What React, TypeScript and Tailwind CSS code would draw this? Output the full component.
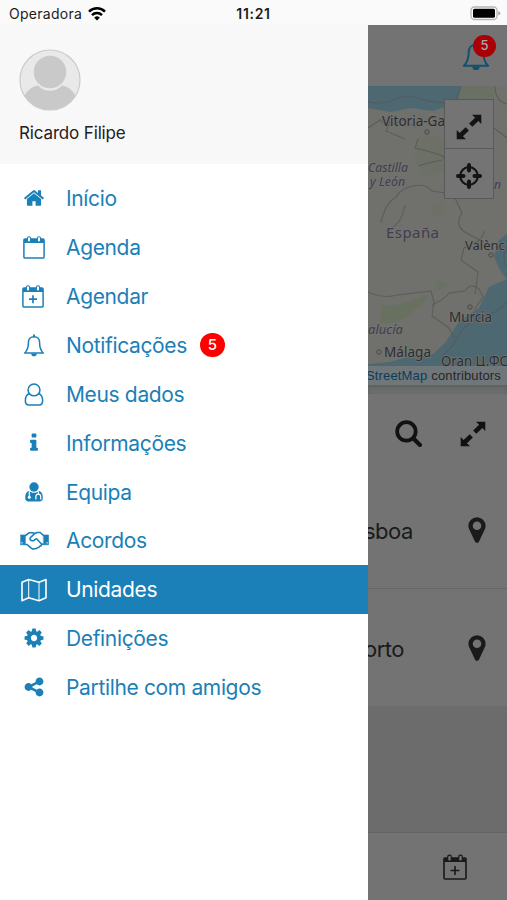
import React from "react";

interface IconProps {
  className?: string;
}

interface MenuItem {
  label: string;
  icon: React.ReactNode;
  badge?: number;
  active?: boolean;
}

function SolidIcon({ d, className }: { d: string; className?: string }) {
  return (
    <svg viewBox="0 0 1792 1792" fill="currentColor" className={className}>
      <path d={d} />
    </svg>
  );
}

const homePath =
  "M1472 992v480q0 26-19 45t-45 19h-384v-384h-256v384h-384q-26 0-45-19t-19-45v-480q0-1 .5-3t.5-3l575-474 575 474q1 2 1 6zm223-69l-62 74q-8 9-21 11h-3q-13 0-21-7l-692-577-692 577q-12 8-24 7-13-2-21-11l-62-74q-8-10-7-23.5t11-21.5l719-599q32-26 76-26t76 26l244 204v-195q0-14 9-23t23-9h192q14 0 23 9t9 23v408l219 182q10 8 11 21.5t-7 23.5z";
const infoPath =
  "M1216 1344v128q0 26-19 45t-45 19h-512q-26 0-45-19t-19-45v-128q0-26 19-45t45-19h64v-384h-64q-26 0-45-19t-19-45v-128q0-26 19-45t45-19h384q26 0 45 19t19 45v576h64q26 0 45 19t19 45zm-128-1152v192q0 26-19 45t-45 19h-256q-26 0-45-19t-19-45v-192q0-26 19-45t45-19h256q26 0 45 19t19 45z";
const sharePath =
  "M1344 1024q133 0 226.5 93.5t93.5 226.5-93.5 226.5-226.5 93.5-226.5-93.5-93.5-226.5q0-12 2-34l-360-180q-92 86-218 86-133 0-226.5-93.5t-93.5-226.5 93.5-226.5 226.5-93.5q126 0 218 86l360-180q-2-22-2-34 0-133 93.5-226.5t226.5-93.5 226.5 93.5 93.5 226.5-93.5 226.5-226.5 93.5q-126 0-218-86l-360 180q2 22 2 34t-2 34l360 180q92-86 218-86z";
const cogPath =
  "M1152 896q0-106-75-181t-181-75-181 75-75 181 75 181 181 75 181-75 75-181zm512-109v222q0 12-8 23t-20 13l-185 28q-19 54-39 91 35 50 107 138 10 12 10 25t-9 23q-27 37-99 108t-94 71q-12 0-26-9l-138-108q-44 23-91 38-16 136-29 186-7 28-36 28h-222q-14 0-24.5-8.5t-11.5-21.5l-28-184q-49-16-90-37l-141 107q-10 9-25 9-14 0-25-11-126-114-165-168-7-10-7-23 0-12 8-23 15-21 51-66.5t54-70.5q-27-50-41-99l-183-27q-13-2-21-12.5t-8-23.5v-222q0-12 8-23t19-13l186-28q14-46 39-92-40-57-107-138-10-12-10-24 0-10 9-23 26-36 98.5-107.5t94.5-71.5q13 0 26 10l138 107q44-23 91-38 16-136 29-186 7-28 36-28h222q14 0 24.5 8.500t11.500 21.500l28 184q49 16 90 37l142-107q9-9 24-9 13 0 25 10 129 119 165 170 7 8 7 22 0 12-8 23-15 21-51 66.500t-54 70.500q26 50 41 98l183 28q13 2 21 12.500t8 23.500z";
const markerPath =
  "M1152 640q0-106-75-181t-181-75-181 75-75 181 75 181 181 75 181-75 75-181zm256 0q0 109-33 179l-364 774q-16 33-47.5 52t-67.5 19-67.5-19-46.5-52l-365-774q-33-70-33-179 0-212 150-362t362-150 362 150 150 362z";

function CalendarIcon({ plus, className }: IconProps & { plus?: boolean }) {
  return (
    <svg viewBox="0 0 22 23" fill="none" stroke="currentColor" className={className}>
      <rect x="0.900" y="2.900" width="20.200" height="19.200" rx="1.200" strokeWidth="1.500" />
      <path d="M1 3h20v4H1z" fill="currentColor" stroke="none" />
      <rect x="4.400" y="0.700" width="3.200" height="5.400" rx="1.600" className="fill-white" strokeWidth="1.100" />
      <rect x="14.400" y="0.700" width="3.200" height="5.400" rx="1.600" className="fill-white" strokeWidth="1.100" />
      {plus && <path d="M11 10.200v8M7 14.200h8" strokeWidth="1.700" />}
    </svg>
  );
}

function BellIcon({ className }: IconProps) {
  return (
    <svg viewBox="0 0 24 26" fill="none" stroke="currentColor" strokeWidth="1.700" strokeLinejoin="round" className={className}>
      <path d="M12 3C8 3 5.700 6 5.700 9.500 5.700 15 4.500 18.500 1.500 21.500H22.500C19.500 18.500 18.300 15 18.300 9.500 18.300 6 16 3 12 3Z" />
      <path d="M12 1.400v1.400" strokeWidth="2.200" strokeLinecap="round" />
      <path d="M8.800 22a3.200 3.200 0 0 0 6.400 0z" fill="currentColor" stroke="none" />
    </svg>
  );
}

function UserIcon({ className }: IconProps) {
  return (
    <svg viewBox="0 0 20 24" fill="none" stroke="currentColor" strokeWidth="1.600" className={className}>
      <circle cx="10" cy="7.200" r="6.200" />
      <path d="M5.200 11.200C2.200 11.800 1 14.600 1 18.600 1 21.200 2.400 23 4.600 23h10.800c2.200 0 3.600-1.800 3.600-4.400 0-4-1.200-6.800-4.200-7.400" />
    </svg>
  );
}

function DoctorIcon({ className }: IconProps) {
  return (
    <svg viewBox="0 0 18 20" fill="currentColor" className={className}>
      <circle cx="9" cy="5" r="4.700" />
      <path d="M4.200 8.700C1.200 9.500.2 12 .2 16c0 2.200 1.200 3.500 3.200 3.500h11.200c2 0 3.200-1.300 3.200-3.500 0-4-1-6.500-4-7.300C11.500 11.500 6.500 11.500 4.200 8.700z" />
      <g fill="none" stroke="#fff" strokeWidth="1.200">
        <path d="M4.300 9.300v5.200" />
        <path d="M13.300 9.300v2.800M10.900 17.500v-2.900a2.400 2.400 0 0 1 4.800 0v2.900" />
      </g>
      <circle cx="4.300" cy="15.200" r="1.500" fill="#fff" />
    </svg>
  );
}

function HandshakeIcon({ className }: IconProps) {
  return (
    <svg viewBox="0 0 29 20" fill="none" stroke="currentColor" strokeWidth="1.600" strokeLinejoin="round" strokeLinecap="round" className={className}>
      <path d="M.5 4h4.800v9.800H.5zM23.700 4h4.800v9.800h-4.800z" fill="currentColor" strokeWidth=".6" />
      <path d="M5.500 4.500 9 1.800h4l1.600.8L17 1.500h3.200l3.300 3" />
      <path d="M5.500 13.500h1.600l4 3.700c1.200 1 2.400 1.300 3.500.5 1.200.2 2.100-.1 2.800-1 1.100 0 2-.5 2.300-1.500 1.300-.1 2-.8 1.900-1.900h1.900" />
      <path d="M14.600 2.600 10.500 6.500c-1 1.200-.2 3.300 1.800 3.300 1.900 0 2.600-2 4.300-2l4.900 5.200" />
      <path d="M1.800 11.800h.3M26.900 11.800h.3" stroke="#fff" strokeWidth="1.300" />
    </svg>
  );
}

function MapIcon({ className }: IconProps) {
  return (
    <svg viewBox="0 0 26 24" fill="none" stroke="currentColor" strokeWidth="1.600" strokeLinejoin="round" className={className}>
      <path d="M1 4.200 7.700 1.500 18 4.200 25 1.500v18.300l-7 2.900-10.300-2.900L1 22.700z" />
      <path d="M7.700 1.500v18.300M18 4.200v18.500" strokeWidth="1" />
    </svg>
  );
}

function ExpandIcon({ className }: IconProps) {
  return (
    <svg viewBox="0 0 26 26" fill="currentColor" className={className}>
      <path d="M16 .8h9.300V10l-2.900-2.900-6.100 5.700-3.200-3.200 6-5.800z" />
      <path d="M10 25.200H.7V16l2.900 2.900 6.100-5.700 3.200 3.200-6 5.800z" />
    </svg>
  );
}

function TargetIcon({ className }: IconProps) {
  return (
    <svg viewBox="0 0 26 26" fill="none" stroke="currentColor" className={className}>
      <circle cx="13" cy="13" r="8.800" strokeWidth="2.200" />
      <path d="M13 2v5.500M13 18.500V24M2 13h5.500M18.500 13H24" strokeWidth="4" strokeLinecap="round" />
    </svg>
  );
}

function SearchIcon({ className }: IconProps) {
  return (
    <svg viewBox="0 0 26 26" fill="none" stroke="currentColor" className={className}>
      <circle cx="11" cy="11" r="8.900" strokeWidth="3.600" />
      <path d="M17.500 17.500 24 24" strokeWidth="4" strokeLinecap="round" />
    </svg>
  );
}

const menuItems: MenuItem[] = [
  { label: "Início", icon: <SolidIcon d={homePath} className="h-[22px] w-[22px]" /> },
  { label: "Agenda", icon: <CalendarIcon className="h-[23px] w-[22px]" /> },
  { label: "Agendar", icon: <CalendarIcon plus className="mr-[2px] h-[23px] w-[22px]" /> },
  { label: "Notificações", icon: <BellIcon className="h-[23px] w-[22px]" />, badge: 5 },
  { label: "Meus dados", icon: <UserIcon className="h-[23px] w-[20px]" /> },
  { label: "Informações", icon: <SolidIcon d={infoPath} className="h-[22px] w-[22px]" /> },
  { label: "Equipa", icon: <DoctorIcon className="h-[20px] w-[18px]" /> },
  { label: "Acordos", icon: <HandshakeIcon className="h-[20px] w-[29px]" /> },
  { label: "Unidades", icon: <MapIcon className="h-[24px] w-[26px]" />, active: true },
  { label: "Definições", icon: <SolidIcon d={cogPath} className="h-[22px] w-[22px]" /> },
  { label: "Partilhe com amigos", icon: <SolidIcon d={sharePath} className="h-[22px] w-[22px]" /> },
];

function StatusBar() {
  return (
    <div className="flex h-[25px] shrink-0 items-center bg-[#fafafa] pt-[2px] text-[#1c1c1c]">
      <div className="flex w-[169px] items-center gap-[6px] pl-[9px]">
        <span className="text-[14px] tracking-[0.28px]">Operadora</span>
        <svg viewBox="0 0 18 14" fill="none" stroke="#000" strokeWidth="2.500" className="h-[14px] w-[18px]">
          <path d="M1 4.600a11.500 11.500 0 0 1 16 0M4 8.100a7.200 7.200 0 0 1 10 0" />
          <path d="M9 13.500 6.200 10.700a4 4 0 0 1 5.600 0z" fill="#000" stroke="none" />
        </svg>
      </div>
      <div className="flex-1 text-center text-[14px] font-semibold tracking-[0.7px]">11:21</div>
      <div className="flex w-[169px] justify-end pr-[6px]">
        <svg viewBox="0 0 31 15" className="h-[15px] w-[31px]">
          <rect x="1" y="1" width="26" height="12.500" rx="3.500" fill="#fff" stroke="#b5b5b5" strokeWidth="1.300" />
          <rect x="3" y="2.800" width="22" height="9" rx="1.500" fill="#000" />
          <path d="M28.300 5v4.500q2-.8 2-2.250T28.300 5z" fill="#a5a5a5" />
        </svg>
      </div>
    </div>
  );
}

function Avatar() {
  return (
    <svg viewBox="0 0 62 62" className="h-[62px] w-[62px]">
      <clipPath id="avatar">
        <circle cx="31" cy="31" r="30" />
      </clipPath>
      <circle cx="31" cy="31" r="30" fill="#e9e9e9" />
      <g clipPath="url(#avatar)" fill="#c9c9c9">
        <path d="M4 50C7 42 13 37 19 36.500 25 43.500 37 43.500 43 36.500 49 37 55 42 58 50V62H4z" />
        <circle cx="31" cy="23" r="16.300" />
      </g>
      <circle cx="31" cy="31" r="30" fill="none" stroke="#cbcbcb" strokeWidth="1.200" />
    </svg>
  );
}

function Drawer() {
  return (
    <aside className="flex w-[368px] shrink-0 flex-col bg-white">
      <div className="h-[139px] bg-[#f8f8f8] pt-[24px] pl-[19px]">
        <Avatar />
        <p className="mt-[10px] text-[17px] leading-[24px] tracking-[-0.15px] text-[#222]">Ricardo Filipe</p>
      </div>
      <nav className="flex flex-col pt-[10px]">
        {menuItems.map((item) => (
          <a
            key={item.label}
            className={
              item.active
                ? "flex h-[48.900px] items-center bg-[#1b80b8] text-white"
                : "flex h-[48.900px] items-center text-[#1b80b8]"
            }
          >
            <span className="flex w-[66px] justify-center pl-[2px]">{item.icon}</span>
            <span className="pt-px text-[21px] tracking-[-0.35px]">{item.label}</span>
            {item.badge && (
              <span className="ml-[13px] flex h-[24px] w-[25px] items-center justify-center rounded-full bg-[#fe0000] text-[15px] font-medium text-white">
                {item.badge}
              </span>
            )}
          </a>
        ))}
      </nav>
    </aside>
  );
}

function MapView() {
  return (
    <div className="relative h-[299px] shrink-0 overflow-hidden">
      <svg viewBox="0 0 139 299" className="h-[299px] w-[139px]">
        <rect width="139" height="299" fill="#70716d" />
        <g fill="#68705f">
          <path d="M50 51q14-5 28 5l-4 14q12 7 4 15l-21 6-10-17z" opacity=".5" />
          <path d="M14 219q24 2 43-11 4 8-12 17-11 14-33 12z" />
          <path d="M67 196q8-4 14 4l-10 5zM93 0h33v13H90z" opacity=".7" />
          <path d="M62 119l13-4 1 12-11 4z" opacity=".5" />
        </g>
        <g fill="#4e6871">
          <path d="M0 0h93l-4 17-24 8-22-3-20 4-23-4z" />
          <path d="M139 148l-8 6-5 17 7 15 6 7-18 8-10 21-19 12-15 23-12 11-25 3-18 5-22 2v21h139z" />
        </g>
        <g fill="none" stroke="#505d68" strokeWidth="1.300">
          <path d="M0 16q17 3 27-3 13-5 25 0 16 4 30 4M93 0l-5 15" />
          <path d="M139 161q-6 8 0 20M139 216q-8 11-28 16-17 7-25 26l-12 13" />
        </g>
        <g fill="none" stroke="#5c5d5a" strokeWidth="1.100">
          <path d="M0 42l12-8 8 6 15-6 13 7M50 53l-3 9 16 4 12 4 5 12M13 137q4-20 15-26 5-9 17-11 13-3 19 5l21 3 9 19q-9 13 6 21l16 8" />
          <path d="M0 206q15 7 30 3l33-4 3 11-2 14 17 12 6 11M64 219q13-6 17-12l16-2q6-9 14-2l4 8-9 13M107 208l3-22-17-12 3-12 16-8 5-9M22 35l-4 10 19 8M37 119q-3 20-19 26" />
          <path d="M127 0q0 15 12 18M126 42l13 10M50 80l14-4 10-2" />
        </g>
        <g fontFamily="Noto Sans, sans-serif" fill="#2d2d30" fontSize="13.500" stroke="#737470" strokeWidth="1.600" paintOrder="stroke">
          <text x="14" y="40">Vitoria-Ga</text>
          <text x="97" y="164" fontSize="13">Valènc</text>
          <text x="81" y="236" textLength="43">Murcia</text>
          <text x="16" y="271" textLength="47">Málaga</text>
          <text x="73" y="280" textLength="67" lengthAdjust="spacingAndGlyphs">Oran Ц.ФС</text>
          <g fill="#413c4e">
            <text x="18" y="152" textLength="53" fontSize="15">España</text>
            <g fontStyle="italic" fontSize="12">
              <text x="0" y="86" textLength="40" lengthAdjust="spacingAndGlyphs">Castilla</text>
              <text x="2" y="100" textLength="35" lengthAdjust="spacingAndGlyphs">y León</text>
              <text x="0" y="248" textLength="35" lengthAdjust="spacingAndGlyphs">alucía</text>
              <text x="126" y="103">n</text>
            </g>
          </g>
        </g>
        <g fill="#70716d" stroke="#484848" strokeWidth="1">
          <circle cx="59" cy="46" r="2.200" />
          <circle cx="123" cy="169" r="2.200" />
          <circle cx="102" cy="221" r="2.200" />
          <circle cx="11" cy="266" r="2.200" />
        </g>
      </svg>
      <div className="absolute top-[13px] right-[13px] flex w-[50px] flex-col border border-[#595959] bg-[#747474] text-[#141414]">
        <button className="flex h-[49px] items-center justify-center border-b border-[#5b5b5b]">
          <ExpandIcon className="mt-[6px] h-[26px] w-[26px]" />
        </button>
        <button className="flex h-[49px] items-center justify-center">
          <TargetIcon className="mt-[4px] h-[26px] w-[26px]" />
        </button>
      </div>
      <div className="absolute right-0 bottom-0 flex h-[19px] w-[139px] items-center justify-end bg-[#70777a] pr-[6px] font-['Liberation_Sans',sans-serif] text-[13px] tracking-[0.15px] whitespace-nowrap text-[#262626]">
        <span className="mr-[4px] text-[#0c3c58]">StreetMap</span> contributors
      </div>
    </div>
  );
}

function UnitRow({ name, className }: { name: string; className: string }) {
  return (
    <div className={className}>
      <span className="-ml-[4px] text-[22px] tracking-[-0.5px]">{name}</span>
      <SolidIcon d={markerPath} className="mr-[15px] mb-[3px] h-[30px] w-[30px]" />
    </div>
  );
}

export default function App() {
  return (
    <div className="flex h-[900px] w-[507px] flex-col overflow-hidden bg-white font-[Inter,sans-serif]">
      <StatusBar />
      <div className="flex min-h-0 flex-1">
        <Drawer />
        <main className="flex w-[139px] flex-col overflow-hidden bg-[#737373] text-[#1a1a1a]">
          <header className="flex h-[61px] shrink-0 justify-end pt-[16px] pr-[17px]">
            <div className="relative">
              <BellIcon className="h-[30px] w-[28px] text-[#134f70]" />
              <span className="absolute -top-[6px] left-[11px] flex h-[22px] w-[23px] items-center justify-center rounded-full bg-[#a90008] text-[13px] font-medium text-[#aaa]">
                5
              </span>
            </div>
          </header>
          <MapView />
          <div className="h-[9px] shrink-0 bg-[#6c6c6c] shadow-[inset_0_2px_3px_#5f5f5f]" />
          <div className="flex h-[79px] shrink-0 items-center justify-between pr-[21px] pl-[27px] text-[#111]">
            <SearchIcon className="h-[27px] w-[27px]" />
            <ExpandIcon className="h-[26px] w-[26px]" />
          </div>
          <UnitRow name="sboa" className="flex h-[116px] shrink-0 items-center justify-between border-b border-[#666] pt-[2px]" />
          <UnitRow name="orto" className="flex h-[117px] shrink-0 items-center justify-between pt-[3px]" />
          <div className="h-[126px] shrink-0 bg-[#6c6c6c]" />
          <footer className="flex flex-1 items-center border-t border-[#646464] pl-[75px]">
            <svg viewBox="0 0 24 26" fill="none" stroke="currentColor" className="h-[26px] w-[24px]">
              <rect x="1" y="4" width="22" height="21" rx="1" strokeWidth="1.600" />
              <path d="M1 4h22v4H1z" fill="currentColor" stroke="none" />
              <rect x="4.700" y="1.200" width="3.600" height="6" rx="1.800" fill="#737373" strokeWidth="1.200" />
              <rect x="15.700" y="1.200" width="3.600" height="6" rx="1.800" fill="#737373" strokeWidth="1.200" />
              <path d="M12 12v9M7.500 16.500h9" strokeWidth="1.600" />
            </svg>
          </footer>
        </main>
      </div>
    </div>
  );
}
